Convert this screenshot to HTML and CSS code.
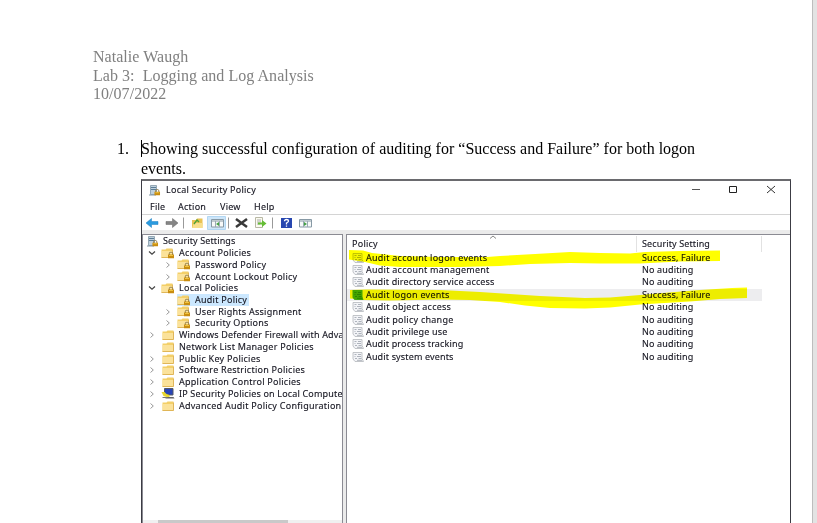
FILE: index.html
```html
<!DOCTYPE html>
<html lang="en">
<head>
<meta charset="utf-8">
<title>Lab 3: Logging and Log Analysis</title>
<link rel="stylesheet" href="styles.css">
</head>
<body>
<svg class="defs" aria-hidden="true">
  <symbol id="folder" viewBox="0 0 12 10"><path d="M.5 1.500h4l1-1h6v9H.5z" fill="#f3cf68"/><path d="M.5 3h10.500v6.500H.5z" fill="#fbe29a"/><path d="M.5 9.500h11v-8" fill="none" stroke="#d9a943" stroke-width=".8"/></symbol>
  <symbol id="lock" viewBox="0 0 7 7"><path d="M1.800 3.500V2a1.700 1.500 0 0 1 3.400 0v1.500" fill="none" stroke="#8d7a4c"/><path d="M.5 3h6v4h-6z" fill="#c98d10"/><path d="M1.500 4h4" stroke="#f0c43e"/></symbol>
  <symbol id="lockfolder" viewBox="0 0 14 11"><use href="#folder" width="12" height="10"/><use href="#lock" x="6.500" y="3.500" width="7" height="7"/></symbol>
  <symbol id="server" viewBox="0 0 12 11"><path d="M1.500.5h6v9h-6z" fill="#bfd0dc" stroke="#8297a6" stroke-width=".8"/><path d="M2 2.500h5M2 4.500h5" stroke="#5b7d96"/><path d="M0 10h7" stroke="#8297a6"/><use href="#lock" x="5" y="4" width="6.500" height="6.500"/></symbol>
  <symbol id="pc" viewBox="0 0 13 11"><path d="M3 .5h8.500v6.500H3z" fill="#2744b8" stroke="#555b66"/><path d="M4 9h8l1 1.500H4z" fill="#666"/><path d="M0 4h3l2 2 3 1v2H5L2 8z" fill="#e7d62f"/><path d="M1 9.500h5" stroke="#777"/></symbol>
  <symbol id="policy" viewBox="0 0 12 10"><path d="M1 .5h9v6l1.500 3H3L1 7z" fill="#eef0f3" fill-opacity=".7" stroke="#b4b7bd" stroke-width=".8"/><path d="M2.500 2.500h2M6 2.500h3M2.500 4.500h1M5 4.500h4M3 6.500h2M6.500 6.500h3M5 8.300h5" stroke="#a6abb4" stroke-width=".9"/></symbol>
  <symbol id="policy-current" viewBox="0 0 12 10"><path d="M.5 0h10v6.500l1 3.500H2.500L.5 7.500z" fill="#43a51a"/><path d="M2.500 2.500h2M6 2.500h3M2.500 4.500h1M5 4.500h4M3 6.500h2M6.500 6.500h3M5 8.300h5" stroke="#2a7d12" stroke-width=".9"/></symbol>
  <symbol id="chev" viewBox="0 0 6 8"><path d="M1.500 1.500 4.300 4 1.500 6.500" fill="none" stroke="#999"/></symbol>
  <symbol id="open" viewBox="0 0 8 6"><path d="M1 1.500 4 4.300l3-2.800" fill="none" stroke="#444" stroke-width="1.200"/></symbol>
</svg>
<div class="page">
  <header class="doc-header">
    <p>Natalie Waugh</p>
    <p>Lab 3:&nbsp; Logging and Log Analysis</p>
    <p>10/07/2022</p>
  </header>
  <div class="item">
    <span class="num">1.</span>
    <p class="prompt"><span class="caret"></span>Showing successful configuration of auditing for “Success and Failure” for both logon<br>events.</p>
  </div>
  <section class="window">
    <div class="titlebar">
      <svg class="app-icon"><use href="#server"/></svg>
      <span>Local Security Policy</span>
      <svg class="controls" viewBox="0 0 84 10"><path d="M1 4.500h8" stroke="#555"/><path d="M38.500 1.500h7v6h-7z" fill="none" stroke="#222"/><path d="m76 1 8 7m0-7-8 7" stroke="#333" fill="none"/></svg>
    </div>
    <nav class="menu"><span class="m1">File</span><span class="m2">Action</span><span class="m3">View</span><span>Help</span></nav>
    <div class="toolbar">
      <svg viewBox="0 0 172 14">
        <path d="M0 7 5.500 2.500v3H12v3H5.500v3z" fill="#2a9be0" stroke="#1d7fc0" stroke-width=".5"/>
        <path d="M32 7 26.500 2.500v3H20v3h6.500v3z" fill="#858585" stroke="#666" stroke-width=".5"/>
        <path d="M37.500 1.500v11M82.500 1.500v11M126.500 1.500v11" stroke="#999"/>
        <path d="M46 4h4l1-1.500h5.500V12H46z" fill="#e9c254"/><path d="M46 12l2-5h9l-1 5z" fill="#f7df8d"/><path d="m48 8 3-4 2 2" stroke="#4da336" stroke-width="1.300" fill="none"/>
        <path d="M61.500.5h18v13h-18z" fill="#cde5f8" stroke="#b2d7f3"/>
        <g id="pane"><path d="M65.500 3.500h12v7.500h-12z" fill="#f7f9f9" stroke="#8799a5"/><path d="M66 5h11" stroke="#8799a5"/><path d="M69.500 5v6M73.500 5v6" stroke="#9baab3"/></g><path d="m70 8 3-2v4z" fill="#44a044"/>
        <path d="m90 3 11 8m0-8-11 8" stroke="#383838" stroke-width="2.500"/>
        <path d="M109.500 1.500h7v10h-7z" fill="#fbfbf0" stroke="#b8b8a5"/><path d="M111 4h4M111 6h4M111 8h3" stroke="#aaa"/><path d="M112 6.500h4V4l4.500 3.500-4.500 3.500V8.500h-4z" fill="#65bd35"/>
        <path d="M135 2h11v10h-11z" fill="#2847b0"/><path d="M138.500 5.200q0-1.700 2-1.700t2 1.500q0 1-2 2v1.500M140.500 9.500v1.300" fill="none" stroke="#fff" stroke-width="1.300"/>
        <use href="#pane" x="88"/><path d="m158 6 3 2-3 2z" fill="#44a044"/>
      </svg>
    </div>
    <div class="panes">
      <div class="tree">
        <div class="node root"><svg class="ico"><use href="#server"/></svg>Security Settings</div>
        <div class="node l1"><svg class="tw"><use href="#open"/></svg><svg class="ico"><use href="#lockfolder"/></svg>Account Policies</div>
        <div class="node l2"><svg class="tw"><use href="#chev"/></svg><svg class="ico"><use href="#lockfolder"/></svg>Password Policy</div>
        <div class="node l2"><svg class="tw"><use href="#chev"/></svg><svg class="ico"><use href="#lockfolder"/></svg>Account Lockout Policy</div>
        <div class="node l1"><svg class="tw"><use href="#open"/></svg><svg class="ico"><use href="#lockfolder"/></svg>Local Policies</div>
        <div class="node l2"><i class="tw"></i><span class="selected"><svg class="ico"><use href="#lockfolder"/></svg>Audit Policy</span></div>
        <div class="node l2"><svg class="tw"><use href="#chev"/></svg><svg class="ico"><use href="#lockfolder"/></svg>User Rights Assignment</div>
        <div class="node l2"><svg class="tw"><use href="#chev"/></svg><svg class="ico"><use href="#lockfolder"/></svg>Security Options</div>
        <div class="node l1"><svg class="tw"><use href="#chev"/></svg><svg class="ico plain"><use href="#folder"/></svg><span class="fit">Windows Defender Firewall with Adva</span></div>
        <div class="node l1"><i class="tw"></i><svg class="ico plain"><use href="#folder"/></svg>Network List Manager Policies</div>
        <div class="node l1"><svg class="tw"><use href="#chev"/></svg><svg class="ico plain"><use href="#folder"/></svg>Public Key Policies</div>
        <div class="node l1"><svg class="tw"><use href="#chev"/></svg><svg class="ico plain"><use href="#folder"/></svg>Software Restriction Policies</div>
        <div class="node l1"><svg class="tw"><use href="#chev"/></svg><svg class="ico plain"><use href="#folder"/></svg>Application Control Policies</div>
        <div class="node l1"><svg class="tw"><use href="#chev"/></svg><svg class="ico"><use href="#pc"/></svg><span class="fit">IP Security Policies on Local Compute</span></div>
        <div class="node l1"><svg class="tw"><use href="#chev"/></svg><svg class="ico plain"><use href="#folder"/></svg>Advanced Audit Policy Configuration</div>
        <div class="hscroll"><div class="thumb"></div></div>
      </div>
      <div class="list">
        <div class="head"><span class="name">Policy</span><span class="setting">Security Setting</span></div>
        <svg class="sort" viewBox="0 0 8 4"><path d="m1 3.500 3-2.500 3 2.500" fill="none" stroke="#888"/></svg>
        <div class="row"><svg><use href="#policy"/></svg><span class="name">Audit account logon events</span><span class="value">Success, Failure</span></div>
        <div class="row"><svg><use href="#policy"/></svg><span class="name">Audit account management</span><span class="value">No auditing</span></div>
        <div class="row"><svg><use href="#policy"/></svg><span class="name tight">Audit directory service access</span><span class="value">No auditing</span></div>
        <div class="row current"><svg><use href="#policy-current"/></svg><span class="name">Audit logon events</span><span class="value">Success, Failure</span></div>
        <div class="row"><svg><use href="#policy"/></svg><span class="name">Audit object access</span><span class="value">No auditing</span></div>
        <div class="row"><svg><use href="#policy"/></svg><span class="name">Audit policy change</span><span class="value">No auditing</span></div>
        <div class="row"><svg><use href="#policy"/></svg><span class="name tight">Audit privilege use</span><span class="value">No auditing</span></div>
        <div class="row"><svg><use href="#policy"/></svg><span class="name tight">Audit process tracking</span><span class="value">No auditing</span></div>
        <div class="row"><svg><use href="#policy"/></svg><span class="name tight">Audit system events</span><span class="value">No auditing</span></div>
        <svg class="marker" viewBox="347 235 442 140"><path d="M349 250 363 250.500 372 253 400 256 440 257 487 257 500 256 535 254 570 252 600 253 630 253.500 645 252 680 251 720 250.500V261L680 261.500 640 263.500 600 263.500 570 263 530 264 500 266 460 267 400 267 380 265.500 365 262 349 259.500z"/><path d="M350 290 366 289.500 440 290 480 292 510 294 540 296 585 298 610 297.500 640 295 675 292 700 290 732 288 747 287.500V298L720 299 690 301.500 640 304.500 610 307.500 585 308.500 550 308 525 305.500 500 302 470 300 440 299.500 390 300.500 365 300 350 298.500z"/></svg>
      </div>
    </div>
  </section>
</div>
</body>
</html>
```
FILE: styles.css
```css
* { box-sizing: border-box; }
html, body { margin: 0; height: 523px; overflow: hidden; background: #e3e3e3; }
p { margin: 0; }
.defs { position: absolute; width: 0; height: 0; }
.page {
  width: 813px; height: 523px; padding: 48px 0 0 93px; overflow: hidden;
  background: #fff; border-right: 1px solid #bdbdbd;
  font: 16px "Liberation Serif", serif; color: #000;
}
.doc-header { color: #808080; line-height: 18.600px; height: 91px; letter-spacing: .04px; }
.item { display: flex; height: 41px; line-height: 20px; }
.num { width: 48px; padding-left: 24px; }
.prompt { position: relative; white-space: nowrap; }
.caret { position: absolute; left: 0; top: 1px; width: 1px; height: 17px; background: #000; }
.window {
  margin-left: 48px; width: 650px; height: 344px;
  border: 1px solid #3c3c44; border-top: 2px solid #6a6a6e; border-bottom: 0;
  font: 9px/12px "Noto Sans", sans-serif; letter-spacing: .25px; color: #151520; background: #fff;
  -webkit-text-stroke: .12px #151520;
  display: flex; flex-direction: column; white-space: nowrap; margin-top: -1px;
}
.titlebar { display: flex; height: 18px; align-items: center; padding-left: 7px; }
.app-icon { width: 12px; height: 11px; margin-right: 5px; }
.controls { width: 84px; height: 10px; margin: 0 15px 0 auto; }
.menu { display: flex; height: 16px; padding: 2px 0 0 8px; border-bottom: 1px solid #d4d4d4; }
.m1 { width: 28px; } .m2 { width: 42px; } .m3 { width: 34px; }
.toolbar { height: 15px; padding: 1px 0 0 4px; }
.toolbar svg { display: block; width: 172px; height: 14px; }
.panes { flex: 1; display: flex; gap: 3px; padding-top: 4px; background: #ebebeb; min-height: 0; }
.tree { width: 201px; padding-top: .6px; overflow: hidden; background: #fff; border: 1px solid #8b8b93; display: flex; flex-direction: column; border-bottom: 0; }
.node { display: flex; align-items: center; height: 11.730px; flex: none; }
.root { padding-left: 4px; letter-spacing: .12px; }
.l1 { padding-left: 5px; }
.l2 { padding-left: 21px; }
.fit { letter-spacing: .17px; }
.tw { width: 8px; height: 8px; flex: none; margin-right: 5px; }
.ico { width: 14px; height: 11px; flex: none; margin-right: 4px; }
.root .ico { width: 12px; margin-right: 4px; }
.node .plain { width: 12px; height: 10px; margin: 0 5px 0 1px; }
.selected { display: flex; align-items: center; height: 12px; padding-right: 2px; background: #cce8ff; }
.hscroll { margin-top: auto; height: 3px; background: #f0f0f0; padding-left: 15px; }
.thumb { width: 130px; height: 3px; background: #c9c9c9; }
.list { position: relative; flex: 1; padding-top: .5px; background: #fff; border: 1px solid #8b8b93; border-width: 1px 0 0 1px; }
.head { display: flex; height: 16px; width: 415px; line-height: 16px; padding-left: 5px; border-right: 1px solid #e2e2e2; }
.head .name { width: 285px; border-right: 1px solid #e2e2e2; }
.head .setting { padding-left: 5px; letter-spacing: .12px; }
.row { display: flex; align-items: center; height: 12.400px; width: 415px; padding-left: 5px; }
.row svg { width: 12px; height: 10px; margin-right: 2px; }
.row .name { width: 276px; }
.row .tight { letter-spacing: .15px; }
.value { letter-spacing: .15px; }
.current { background: #ededef; }
.sort { position: absolute; left: 142px; top: 0; width: 8px; height: 4px; }
.list .marker { position: absolute; left: 0; top: 0; width: 442px; height: 140px; fill: #ff0; mix-blend-mode: multiply; }
```
